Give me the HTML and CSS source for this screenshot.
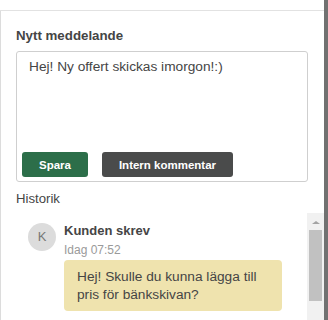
FILE: index.html
```html
<!DOCTYPE html>
<html lang="sv">
<head>
  <meta charset="UTF-8">
  <meta name="viewport" content="width=device-width, initial-scale=1.0">
  <title>Meddelanden</title>
  <link rel="stylesheet" href="styles.css">
</head>
<body>

  <div class="frame">
    <div class="panel">
      <div class="panel-top"></div>

      <div class="panel-body">
        <!-- Nytt meddelande -->
        <div class="compose">
          <h2 class="compose-title">Nytt meddelande</h2>
          <div class="compose-box">
            <textarea class="compose-text">Hej! Ny offert skickas imorgon!:)</textarea>
            <div class="compose-actions">
              <button class="btn btn-save">Spara</button>
              <button class="btn btn-note">Intern kommentar</button>
            </div>
          </div>
        </div>

        <!-- Historik -->
        <h3 class="history-title">Historik</h3>
        <div class="history">
          <div class="history-list">
            <div class="message">
              <div class="avatar">K</div>
              <div class="message-body">
                <div class="message-author">Kunden skrev</div>
                <div class="message-time">Idag 07:52</div>
                <div class="message-bubble">Hej! Skulle du kunna lägga till pris för bänkskivan?</div>
              </div>
            </div>
          </div>
          <div class="scrollbar">
            <div class="scroll-arrow"></div>
            <div class="scroll-thumb"></div>
          </div>
        </div>
      </div>
    </div>
    <div class="edge"></div>
  </div>

</body>
</html>
```

FILE: styles.css
```css
body {
  margin: 0;
  font-family: "Liberation Sans", Arial, sans-serif;
  color: #454545;
  background: #fff;
}
.frame {
  display: flex;
  height: 320px;
  overflow: hidden;
}
.panel {
  width: 324px;
  flex: none;
}
.edge {
  width: 4px;
  flex: none;
  background: #717171;
}
.panel-top {
  height: 10px;
  border-bottom: 1px solid #e2e2e2;
}
.panel-body {
  border-left: 1px solid #dcdcdc;
  padding: 16px 0 0 15px;
}

/* Nytt meddelande */
.compose {
  padding-right: 16px;
}
.compose-title {
  margin: 0 0 6px;
  font-size: 13.3px;
  line-height: 18px;
  font-weight: bold;
}
.compose-box {
  display: flex;
  flex-direction: column;
  box-sizing: border-box;
  height: 131px;
  border: 1px solid #cfcfcf;
  border-radius: 3px;
  padding: 5px 5px 4px;
}
.compose-text {
  flex: 1;
  border: none;
  outline: none;
  resize: none;
  margin: 0;
  padding: 1px 7px;
  font-family: inherit;
  font-size: 13.7px;
  line-height: 18px;
  color: #454545;
  background: transparent;
}
.compose-actions {
  display: flex;
  gap: 14px;
}
.btn {
  height: 25px;
  padding: 0;
  border: none;
  border-radius: 3px;
  font-family: inherit;
  font-size: 11.5px;
  font-weight: bold;
  color: #fff;
  cursor: pointer;
}
.btn-save {
  width: 66px;
  background-color: #2c6e49;
}
.btn-note {
  width: 131px;
  background-color: #4a4b4b;
}

/* Historik */
.history-title {
  margin: 8px 0 5px;
  font-size: 13.2px;
  line-height: 18px;
  font-weight: normal;
}
.history {
  display: flex;
  height: 120px;
}
.history-list {
  flex: 1;
  padding: 10px 0 0 12px;
}
.message {
  display: flex;
  gap: 8px;
}
.avatar {
  width: 28px;
  height: 28px;
  flex: none;
  border-radius: 50%;
  background: #dcdcdc;
  color: #777;
  font-size: 13px;
  line-height: 28px;
  text-align: center;
}
.message-author {
  font-size: 13px;
  line-height: 16px;
  font-weight: bold;
}
.message-time {
  margin: 2px 0 1px;
  font-size: 12px;
  line-height: 18px;
  color: #9a9a9a;
}
.message-bubble {
  box-sizing: border-box;
  width: 218px;
  padding: 8px 12px 7px 13px;
  border-radius: 4px;
  background: #efe3ae;
  font-size: 13.7px;
  line-height: 18px;
}
.scrollbar {
  width: 17px;
  flex: none;
  background: #f1f1f1;
}
.scroll-arrow {
  width: 0;
  height: 0;
  margin: 8px auto 6px;
  border-left: 4px solid transparent;
  border-right: 4px solid transparent;
  border-bottom: 3px solid #a3a3a3;
}
.scroll-thumb {
  height: 71px;
  margin: 0 2px;
  background: #c1c1c1;
}
```
